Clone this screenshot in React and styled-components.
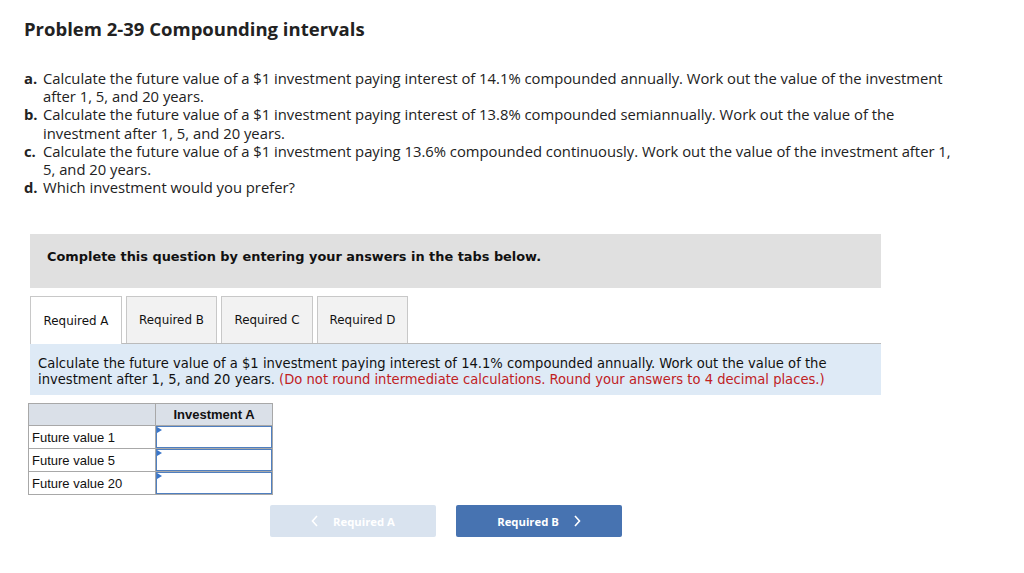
import React from "react"
import styled, { createGlobalStyle } from "styled-components"

const Global = createGlobalStyle`
    body {
        margin: 0;
        background: #ffffff;
        font-family: "Open Sans", "Liberation Sans", sans-serif;
        color: #222;
    }
`

const Page = styled.div`
    width: 1024px;
    height: 573px;
    padding: 16px 0 0 24px;
    box-sizing: border-box;
    overflow: hidden;
`

const Title = styled.h1`
    margin: 0;
    font-family: "Open Sans", sans-serif;
    font-weight: 700;
    font-size: 18.5px;
    line-height: 26px;
    color: #222;
`

const List = styled.ol`
    margin: 27px 0 0 0;
    padding: 0;
    list-style: none;
    width: 930px;
`

const Item = styled.li`
    display: flex;
    font-family: "Open Sans", sans-serif;
    font-size: 14.8px;
    line-height: 18.2px;
    color: #222;
`

const Letter = styled.span`
    flex: 0 0 19px;
    font-weight: 700;
`

const Section = styled.div`
    margin: 38px 0 0 6px;
    width: 851px;
`

const Banner = styled.div`
    background: #e0e0e0;
    height: 54px;
    box-sizing: border-box;
    padding: 15px 0 0 17px;
    font-family: "DejaVu Sans", Verdana, sans-serif;
    font-weight: 700;
    font-size: 12.9px;
    line-height: 16px;
    color: #111;
`

const Tabs = styled.div`
    display: flex;
    gap: 4px;
    margin-top: 8px;
    border-bottom: 1px solid #bbb;
`

const Tab = styled.div`
    width: ${p => p.w}px;
    box-sizing: border-box;
    display: flex;
    align-items: center;
    justify-content: center;
    border: 1px solid #c8c8c8;
    border-bottom: none;
    background: ${p => (p.active ? "#ffffff" : "#f2f2f2")};
    font-family: "DejaVu Sans", Verdana, sans-serif;
    font-size: 11.9px;
    color: #111;
    margin-bottom: ${p => (p.active ? "-1px" : "0")};
    height: ${p => (p.active ? "48px" : "47px")};
`

const Prompt = styled.div`
    background: #deeaf6;
    padding: 11px 8px 8px 8px;
    font-family: "DejaVu Sans Condensed", "DejaVu Sans", sans-serif;
    font-size: 14.6px;
    line-height: 16px;
    color: #111;
`

const Note = styled.span`
    color: #c0211f;
`

const Table = styled.table`
    margin: 8px 0 0 -2px;
    border-collapse: collapse;
    font-family: "Liberation Sans", Arial, sans-serif;
    font-size: 13px;
    color: #111;
`

const Head = styled.th`
    background: #dae0e8;
    border: 1px solid #a8a8a8;
    height: 21px;
    padding: 0;
    width: ${p => p.w}px;
    font-weight: 700;
    font-size: 13px;
    text-align: center;
`

const Label = styled.td`
    border: 1px solid #a8a8a8;
    height: 22px;
    padding: 0 0 0 3px;
    width: 123px;
`

const Cell = styled.td`
    border: 1px solid #a8a8a8;
    padding: 0;
    position: relative;
`

const Input = styled.div`
    height: 20px;
    border: 1px solid #4f7fc0;
    background: #fff;
`

const Flag = styled.span`
    position: absolute;
    left: 1px;
    top: 1px;
    width: 0;
    height: 0;
    border-top: 3px solid transparent;
    border-bottom: 3px solid transparent;
    border-left: 5px solid #3a76c9;
`

const Nav = styled.div`
    display: flex;
    gap: 20px;
    margin: 10px 0 0 240px;
`

const NavButton = styled.div`
    width: 166px;
    height: 32px;
    border-radius: 2px;
    display: flex;
    align-items: center;
    justify-content: center;
    gap: 14px;
    background: ${p => (p.disabled ? "#d9e3ef" : "#4773b1")};
    color: #ffffff;
    font-family: "Open Sans", sans-serif;
    font-weight: 700;
    font-size: 11.3px;
`

const Chevron = ({ dir }) => (
    <svg width="8" height="12" viewBox="0 0 8 12">
        <path
            d={dir === "left" ? "M6 1 L1.5 6 L6 11" : "M2 1 L6.5 6 L2 11"}
            fill="none"
            stroke="#ffffff"
            strokeWidth="1.6"
        />
    </svg>
)

const items = [
    ["a.", "Calculate the future value of a $1 investment paying interest of 14.1% compounded annually. Work out the value of the investment after 1, 5, and 20 years."],
    ["b.", "Calculate the future value of a $1 investment paying interest of 13.8% compounded semiannually. Work out the value of the investment after 1, 5, and 20 years."],
    ["c.", "Calculate the future value of a $1 investment paying 13.6% compounded continuously. Work out the value of the investment after 1, 5, and 20 years."],
    ["d.", "Which investment would you prefer?"],
]

const tabs = [
    ["Required A", 92],
    ["Required B", 91],
    ["Required C", 92],
    ["Required D", 91],
]

const rows = ["Future value 1", "Future value 5", "Future value 20"]

const App = () => {
    return (
        <Page>
            <Global />
            <Title>Problem 2-39 Compounding intervals</Title>
            <List>
                {items.map(([l, t]) => (
                    <Item key={l}>
                        <Letter>{l}</Letter>
                        <span>{t}</span>
                    </Item>
                ))}
            </List>
            <Section>
                <Banner>Complete this question by entering your answers in the tabs below.</Banner>
                <Tabs>
                    {tabs.map(([t, w], i) => (
                        <Tab key={t} w={w} active={i === 0}>{t}</Tab>
                    ))}
                </Tabs>
                <Prompt>
                    Calculate the future value of a $1 investment paying interest of 14.1% compounded annually. Work out the value of the
                    <br />
                    investment after 1, 5, and 20 years. <Note>(Do not round intermediate calculations. Round your answers to 4 decimal places.)</Note>
                </Prompt>
                <Table>
                    <thead>
                        <tr>
                            <Head w={126}></Head>
                            <Head w={116}>Investment A</Head>
                        </tr>
                    </thead>
                    <tbody>
                        {rows.map(r => (
                            <tr key={r}>
                                <Label>{r}</Label>
                                <Cell>
                                    <Flag />
                                    <Input />
                                </Cell>
                            </tr>
                        ))}
                    </tbody>
                </Table>
                <Nav>
                    <NavButton disabled>
                        <Chevron dir="left" />
                        <span>Required A</span>
                    </NavButton>
                    <NavButton>
                        <span>Required B</span>
                        <Chevron dir="right" />
                    </NavButton>
                </Nav>
            </Section>
        </Page>
    )
}

export default App
